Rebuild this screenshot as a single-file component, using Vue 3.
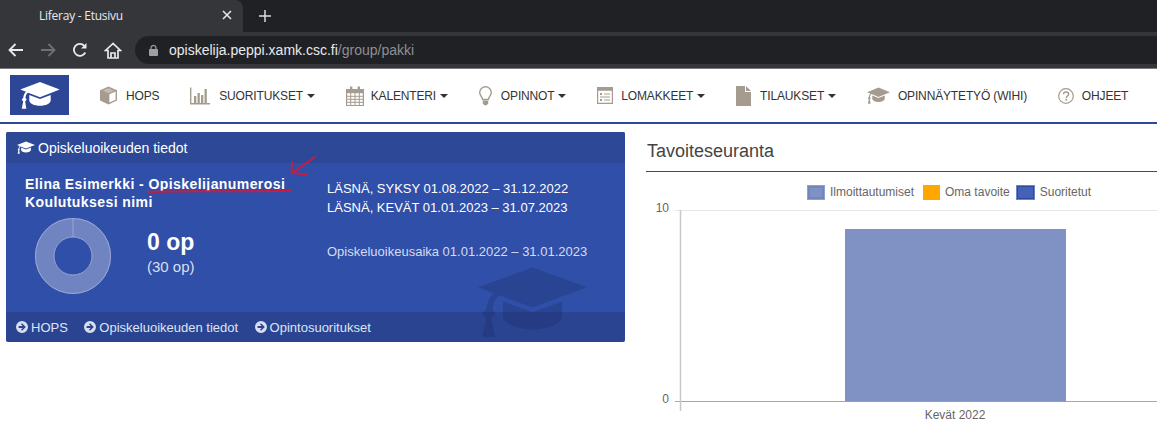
<script setup>
const nav = [
  { icon: 'cube', w: 19, h: 19, gap: 8, label: 'HOPS' },
  { icon: 'bars', w: 20, h: 18, gap: 9, label: 'SUORITUKSET', caret: true },
  { icon: 'cal', w: 18, h: 20, gap: 7, label: 'KALENTERI', caret: true },
  { icon: 'bulb', w: 13, h: 20, gap: 9, label: 'OPINNOT', caret: true },
  { icon: 'form', w: 16, h: 17, gap: 8, label: 'LOMAKKEET', caret: true },
  { icon: 'file', w: 15, h: 20, gap: 9, label: 'TILAUKSET', caret: true },
  { icon: 'cap', w: 23, h: 17, gap: 8, label: 'OPINNÄYTETYÖ (WIHI)' },
  { icon: 'help', w: 16, h: 16, gap: 8, label: 'OHJEET' }
]
const links = ['HOPS', 'Opiskeluoikeuden tiedot', 'Opintosuoritukset']
const legend = [
  { label: 'Ilmoittautumiset', cls: 'sw-a' },
  { label: 'Oma tavoite', cls: 'sw-b' },
  { label: 'Suoritetut', cls: 'sw-c' }
]
</script>

<template>
  <div class="page">
    <svg class="defs" aria-hidden="true">
      <symbol id="cap" viewBox="0 0 24 17" preserveAspectRatio="none">
        <path d="M0 5.200 12 .6l12 4.600-12 4.700-7.200-2.800C3.800 7.600 3.300 8.700 3.200 10.300l.7 1-.9 1.200L3.700 16.800H.9l.9-4.400-.9-1.100.9-1C2 8.600 2.600 7.400 3.500 6.600Z"/>
        <path d="M5.500 8.500 12 11l6.500-2.500v3.300C18.500 13.600 15.500 15 12 15s-6.500-1.400-6.500-3.200Z"/>
      </symbol>
      <symbol id="cube" viewBox="0 0 19 19">
        <path d="M9.500.6 18 4.300v10.300l-8.500 3.900L1 14.600V4.300Z" fill="#a59b8f"/>
        <path d="M10.400 8.300 16.600 5.500v8.200l-6.200 2.900Z" fill="#fff"/>
        <path d="M9.500 2.300 15.300 4.600 9.500 7.200 3.700 4.600Z" fill="#c4bcb2"/>
      </symbol>
      <symbol id="bars" viewBox="0 0 20 18">
        <path d="M.7.500v16.300H20" fill="none" stroke="#a59b8f" stroke-width="1.400"/>
        <path d="M4 9h2.300v7H4zM7.500 6h2.300v10H7.500zM11 8h2.300v8H11zM14.500 2h2.300v14h-2.300z" fill="#a59b8f"/>
      </symbol>
      <symbol id="cal" viewBox="0 0 18 20">
        <path d="M.6 3.500h16.800v16H.6z" fill="#fff" stroke="#a59b8f" stroke-width="1.200"/>
        <path d="M.6 3.500h16.800v3.700H.6z" fill="#a59b8f"/>
        <path d="M4 .6h2.400v5H4zM11.600.6H14v5h-2.400z" fill="#a59b8f"/>
        <path d="M.6 10.300h16.800M.6 13.300h16.800M.6 16.300h16.800M4.700 7v12.500M9 7v12.500M13.300 7v12.500" fill="none" stroke="#a59b8f"/>
      </symbol>
      <symbol id="bulb" viewBox="0 0 13 20">
        <path d="M6.500.7a5.800 5.800 0 0 0-5.800 5.800c0 3 2.400 4 2.900 7h5.800c.5-3 2.900-4 2.900-7A5.800 5.800 0 0 0 6.500.7Z" fill="#fff" stroke="#a59b8f" stroke-width="1.400"/>
        <path d="M3.800 14.500h5.400v2.800l-1.400 2H5.200l-1.400-2Z" fill="#a59b8f"/>
      </symbol>
      <symbol id="form" viewBox="0 0 16 17">
        <path d="M.6.6h14.800v15.800H.6z" fill="#fff" stroke="#a59b8f" stroke-width="1.200"/>
        <path d="M.6.6h14.800v3.200H.6zM3 6h2v2H3zM7 6.500h6v1H7zM3 9.500h10v1H3zM3 12h2v2H3zM7 12.500h6v1H7z" fill="#a59b8f"/>
      </symbol>
      <symbol id="file" viewBox="0 0 15 20">
        <path d="M0 0h9v6h6v14H0ZM10 0l5 5h-5Z" fill="#a59b8f"/>
      </symbol>
      <symbol id="help" viewBox="0 0 16 16">
        <circle cx="8" cy="8" r="7.300" fill="none" stroke="#a59b8f" stroke-width="1.200"/>
        <path d="M5.500 6.200C5.600 4.700 6.700 4 8 4c1.500 0 2.600.9 2.600 2.200 0 2-2.300 1.900-2.300 3.700" fill="none" stroke="#a59b8f" stroke-width="1.500"/>
        <path d="M7.400 10.800h1.700v1.700H7.400z" fill="#a59b8f"/>
      </symbol>
      <symbol id="go" viewBox="0 0 12 12">
        <path fill-rule="evenodd" d="M6 0a6 6 0 1 1 0 12A6 6 0 0 1 6 0Zm0 2.200L5 3.300l1.700 1.600H2.600v2.200h4.100L5 8.700l1 1.100L9.800 6Z"/>
      </symbol>
    </svg>

    <header class="chrome">
      <div class="tabstrip">
        <div class="tab">
          <span class="tab-title">Liferay - Etusivu</span>
          <svg class="tab-x" width="10" height="10" viewBox="0 0 10 10"><path d="M1 1l8 8M9 1 1 9" stroke="#e8eaed" stroke-width="1.500"/></svg>
        </div>
        <svg class="tab-plus" width="12" height="12" viewBox="0 0 12 12"><path d="M6 0v12M0 6h12" stroke="#dadce0" stroke-width="1.500"/></svg>
      </div>
      <div class="toolbar">
        <div class="tools">
          <svg width="16" height="14" viewBox="0 0 16 14"><path d="M15 7H2M7.500 1 1.500 7l6 6" fill="none" stroke="#e8eaed" stroke-width="1.800"/></svg>
          <svg width="16" height="14" viewBox="0 0 16 14"><path d="M1 7h13M8.500 1l6 6-6 6" fill="none" stroke="#6f7175" stroke-width="1.800"/></svg>
          <svg width="16" height="16" viewBox="0 0 16 16"><path d="M13.300 10.500A6 6 0 1 1 12.400 3.800" fill="none" stroke="#e8eaed" stroke-width="1.800"/><path d="M14.500 1v5.500H9Z" fill="#e8eaed"/></svg>
          <svg width="18" height="17" viewBox="0 0 18 17"><path d="M9 1.500 1.500 8.500h2.500v7.500h10V8.500h2.500ZM7 16v-5h4v5" fill="none" stroke="#e8eaed" stroke-width="1.700"/></svg>
        </div>
        <div class="omnibox">
          <svg width="9" height="11" viewBox="0 0 9 11"><path d="M2 4.500V3a2.500 2.500 0 0 1 5 0v1.500" fill="none" stroke="#9aa0a6" stroke-width="1.200"/><rect y="4" width="9" height="7" rx="1" fill="#9aa0a6"/></svg>
          <span class="url"><span class="host">opiskelija.peppi.xamk.csc.fi</span><span class="path">/group/pakki</span></span>
        </div>
      </div>
    </header>

    <nav class="nav">
      <div class="logo">
        <svg width="40" height="28" viewBox="0 0 24 17" fill="#fff"><use href="#cap"/></svg>
      </div>
      <ul class="menu">
        <li v-for="item in nav" :key="item.label" class="menu-item">
          <svg class="menu-icon" :width="item.w" :height="item.h" :style="{ marginRight: item.gap + 'px' }"><use :href="'#' + item.icon"/></svg>
          <span>{{ item.label }}</span>
          <i v-if="item.caret" class="caret"></i>
        </li>
      </ul>
    </nav>

    <main class="content">
      <section class="card">
        <svg class="watermark" width="109" height="73"><use href="#cap"/></svg>
        <div class="card-head">
          <svg width="18" height="13" fill="#fff"><use href="#cap"/></svg>
          <span>Opiskeluoikeuden tiedot</span>
        </div>
        <div class="card-body">
          <div class="left">
            <div class="name">Elina Esimerkki - Opiskelijanumerosi</div>
            <div class="name">Koulutuksesi nimi</div>
            <div class="stats">
              <svg class="donut" width="76" height="76" viewBox="0 0 76 76">
                <circle cx="38" cy="38" r="28.500" fill="none" stroke="#6f84c0" stroke-width="19"/>
                <circle cx="38" cy="38" r="37.500" fill="none" stroke="#98a7d4" stroke-width="1"/>
                <circle cx="38" cy="38" r="19" fill="#304fa8" stroke="#98a7d4" stroke-width="1"/>
                <path d="M38 0v19" stroke="#98a7d4"/>
              </svg>
              <div class="credits">
                <div class="big">0 op</div>
                <div class="small">(30 op)</div>
              </div>
            </div>
          </div>
          <div class="right">
            <div>LÄSNÄ, SYKSY 01.08.2022 – 31.12.2022</div>
            <div>LÄSNÄ, KEVÄT 01.01.2023 – 31.07.2023</div>
            <div class="period">Opiskeluoikeusaika 01.01.2022 – 31.01.2023</div>
          </div>
        </div>
        <div class="card-foot">
          <span v-for="l in links" :key="l" class="foot-link">
            <svg width="12" height="12" fill="#d9dff0"><use href="#go"/></svg>{{ l }}
          </span>
        </div>
        <svg class="marks" width="180" height="45" viewBox="0 0 180 45">
          <path d="M0 38.800C45 37.500 90 39 144 37.800" fill="none" stroke="#d01a3a" stroke-width="2" stroke-linecap="round"/>
          <path d="M168 4 145 20M145 9 144.500 20 160 21.500" fill="none" stroke="#d01a3a" stroke-width="1.800" stroke-linecap="round"/>
        </svg>
      </section>

      <section class="chart">
        <h2 class="chart-title">Tavoiteseuranta</h2>
        <ul class="legend">
          <li v-for="l in legend" :key="l.label"><i :class="l.cls"></i>{{ l.label }}</li>
        </ul>
        <svg class="plot" width="511" height="224" viewBox="0 0 511 224">
          <path d="M34 10.500H511" stroke="#e5e5e5"/>
          <path d="M34 201.500H511M29 201.500h5" stroke="#a8a8a8"/>
          <path d="M29 10.500h5" stroke="#e5e5e5"/>
          <path d="M34.500 10v201" stroke="#c8c8c8" stroke-width="1.500"/>
          <rect x="199" y="29" width="221" height="172.500" fill="#8092c3"/>
          <text x="23" y="12" text-anchor="end">10</text>
          <text x="23" y="203" text-anchor="end">0</text>
          <text x="309" y="219" text-anchor="middle">Kevät 2022</text>
        </svg>
      </section>
    </main>
  </div>
</template>

<style scoped>
.page {
  width: 1157px;
  height: 434px;
  overflow: hidden;
  background: #fff;
  font-family: "Liberation Sans", Arial, sans-serif;
}
.defs { position: absolute; width: 0; height: 0; }

.chrome { background: #202124; }
.tabstrip { height: 32px; display: flex; align-items: center; }
.tab {
  width: 243px;
  height: 32px;
  box-sizing: border-box;
  padding: 0 11px 2px 39px;
  display: flex;
  align-items: center;
  justify-content: space-between;
  background: #35363a;
  border-radius: 0 8px 0 0;
}
.tab-title { color: #e8eaed; font: 12px "Open Sans", sans-serif; letter-spacing: -.25px; }
.tab-plus { margin-left: 16px; }
.toolbar {
  height: 37px;
  box-sizing: border-box;
  padding: 4px 0 4px 8px;
  display: flex;
  align-items: center;
  background: #35363a;
  border-bottom: 1px solid #7a7b7e;
}
.tools { width: 127px; display: flex; align-items: center; gap: 16px; }
.omnibox {
  flex: 1;
  height: 28px;
  display: flex;
  align-items: center;
  gap: 11px;
  padding-left: 14px;
  background: #202124;
  border-radius: 14px 0 0 14px;
}
.url { font-size: 14px; }
.host { color: #e8eaed; }
.path { color: #8d9095; }

.nav {
  height: 53px;
  display: flex;
  align-items: center;
  padding-left: 10px;
  border-bottom: 2px solid #2d4a9a;
}
.logo {
  width: 59px;
  height: 40px;
  margin-top: -1px;
  margin-right: 30px;
  display: flex;
  align-items: center;
  justify-content: center;
  background: #2d4696;
}
.menu { list-style: none; margin: 0; padding: 0; display: flex; gap: 30.8px; }
.menu-item { display: flex; align-items: center; height: 20px; font-size: 12px; color: #333; white-space: nowrap; letter-spacing: -.15px; }
.menu-icon { fill: #a59b8f; }
.caret {
  margin-left: 4px;
  border-top: 4px solid #333;
  border-left: 4px solid transparent;
  border-right: 4px solid transparent;
}

.content { display: flex; align-items: flex-start; padding: 8px 0 0 6px; }
.card {
  position: relative;
  width: 619px;
  height: 210px;
  display: flex;
  flex-direction: column;
  background: #304fa8;
  border-radius: 2px;
  color: #fff;
  overflow: hidden;
}
.watermark { position: absolute; left: 472px; top: 133px; fill: #1d2f66; opacity: .33; }
.marks { position: absolute; left: 141px; top: 21px; pointer-events: none; }
.card-head {
  height: 31px;
  display: flex;
  align-items: center;
  gap: 3px;
  padding-left: 11px;
  font-size: 14px;
  background: #2d4896;
}
.card-body { flex: 1; display: flex; padding-top: 12px; }
.left { width: 321px; box-sizing: border-box; padding-left: 19px; }
.name { font-size: 14px; font-weight: 700; line-height: 18px; letter-spacing: .42px; }
.stats { display: flex; margin: 7px 0 0 10px; }
.credits { margin: 10px 0 0 36px; }
.big { font-size: 23px; font-weight: 700; line-height: 28px; }
.small { font-size: 15px; line-height: 22px; color: #d9dff0; }
.right { font-size: 13px; line-height: 19px; padding-top: 4px; }
.period { margin-top: 25px; color: #d4dcf2; }
.card-foot {
  position: relative;
  height: 30px;
  display: flex;
  align-items: center;
  gap: 16.5px;
  padding-left: 10px;
  font-size: 13px;
  color: #dfe4f2;
  background: rgba(29, 47, 102, .33);
}
.foot-link { display: flex; align-items: center; gap: 3px; }

.chart { width: 511px; margin-left: 21px; flex: none; }
.chart-title {
  margin: 0;
  height: 31px;
  padding: 8px 0 0 1px;
  font-size: 18px;
  font-weight: 400;
  line-height: 22px;
  color: #444;
  border-bottom: 1px solid #2d4a9a;
  box-sizing: content-box;
}
.legend {
  list-style: none;
  margin: 13px 0 0 161px;
  padding: 0;
  display: flex;
  height: 15px;
  font-size: 12px;
  color: #666;
  line-height: 15px;
}
.legend li { display: flex; align-items: center; margin-right: 9px; }
.legend li:nth-child(2) { margin-right: 6px; }
.legend i { display: block; box-sizing: border-box; height: 15px; margin-right: 5px; }
.sw-a { width: 18px; background: #8092c3; border: 1px solid #8ea0d0; box-shadow: inset 0 0 0 2px #7487bd; }
.sw-b { width: 17px; background: #ffa600; }
.sw-c { width: 19px; background: #4562b8; border: 1px solid #6f86c6; box-shadow: inset 0 0 0 1px #2d4a9a; }
.plot { display: block; }
.plot text { font: 12px "Liberation Sans", Arial, sans-serif; fill: #666; }
</style>

<style>
html, body { margin: 0; background: #fff; }
</style>
